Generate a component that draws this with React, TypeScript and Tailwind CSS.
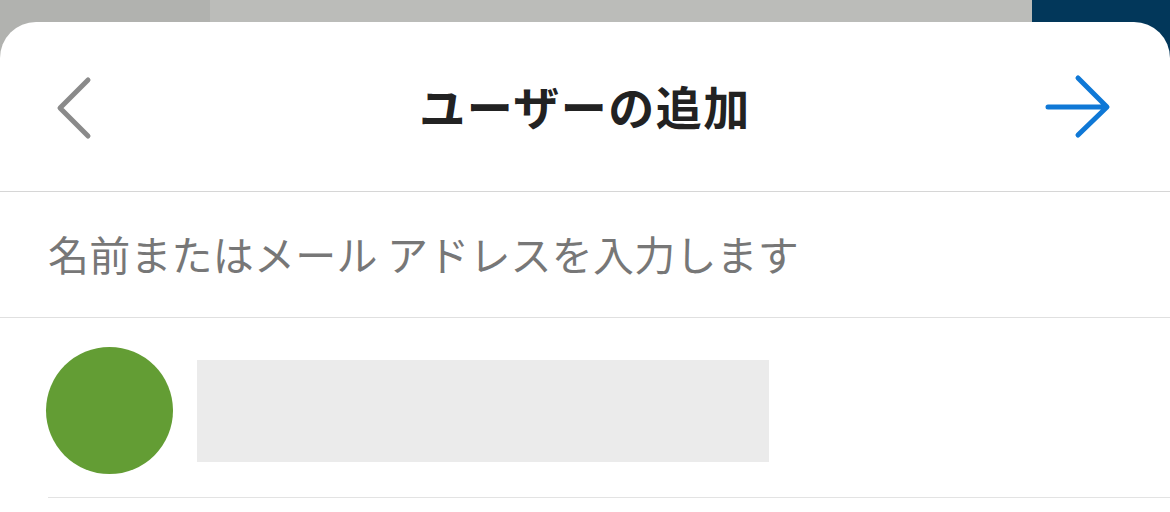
export default function App() {
  return (
    <div
      className="w-[1170px] h-[512px] overflow-hidden bg-[linear-gradient(to_right,#b1b2af_210px,#bbbcb9_210px,#bbbcb9_1032px,#02375a_1032px)]"
      style={{ fontFamily: '"Noto Sans CJK JP", "Noto Sans", sans-serif' }}
    >
      <div className="mt-[22px] h-[490px] bg-white rounded-t-[36px] flex flex-col">
        {/* header */}
        <header className="h-[170px] shrink-0 grid grid-cols-[1fr_auto_1fr] items-center px-[48px] border-b border-[#d6d6d6]">
          <div className="flex">
            <svg width="48" height="70" viewBox="0 0 48 70">
              <path d="M40 8 L12 36 L40 64" fill="none" stroke="#8a8a8a" strokeWidth="5" strokeLinecap="round" strokeLinejoin="round" />
            </svg>
          </div>
          <h1 className="text-[46px] leading-none font-bold text-[#222] tracking-[1.5px] -mt-[4px]">ユーザーの追加</h1>
          <div className="flex justify-end">
            <svg width="76" height="70" viewBox="0 0 76 70" className="mr-[4px]">
              <path d="M6 35 L64 35 M36 6 L65 35 L36 63" fill="none" stroke="#0f78d6" strokeWidth="5" strokeLinecap="round" strokeLinejoin="round" />
            </svg>
          </div>
        </header>

        {/* search input */}
        <div className="h-[126px] shrink-0 flex items-center px-[48px] border-b border-[#e0e0e0]">
          <span className="text-[41px] leading-none text-[#777777] tracking-[0.2px] -mt-[2px]">名前またはメール アドレスを入力します</span>
        </div>

        {/* suggestion row */}
        <div className="pl-[48px]">
          <div className="h-[180px] pt-[6px] flex items-center gap-[24px] border-b border-[#e3e3e3]">
            <div className="w-[127px] h-[127px] rounded-full bg-[#639d34] -ml-[2px]" />
            <div className="w-[572px] h-[102px] bg-[#ebebeb]" />
          </div>
        </div>
      </div>
    </div>
  );
}
